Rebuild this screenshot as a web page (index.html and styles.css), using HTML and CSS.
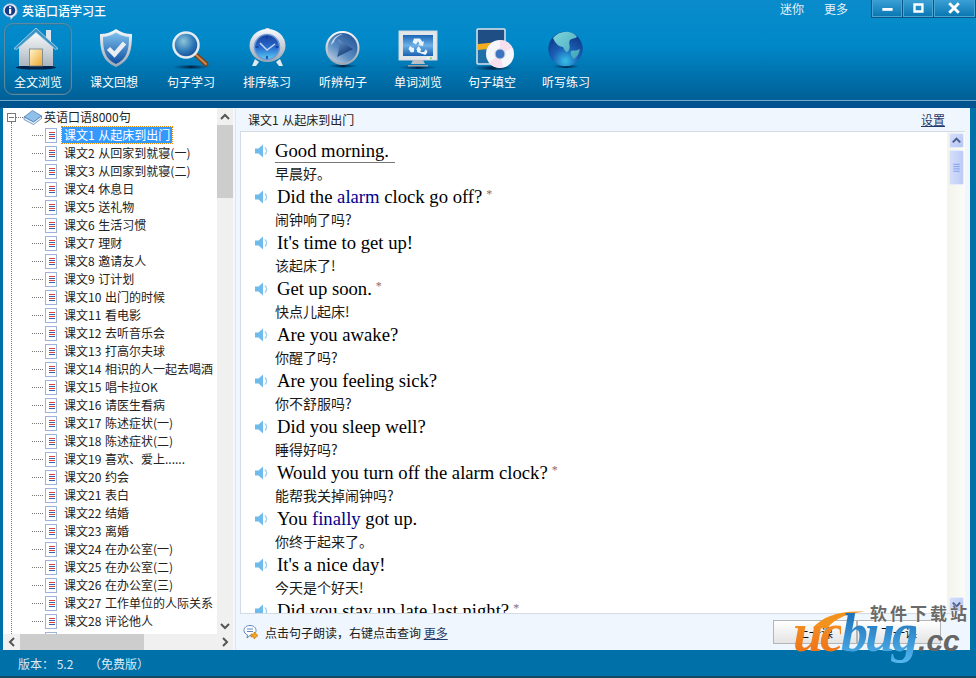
FILE: index.html
```html
<!DOCTYPE html>
<html lang="zh">
<head>
<meta charset="utf-8">
<title>英语口语学习王</title>
<link rel="stylesheet" href="styles.css">
</head>
<body>
<svg class="defs" width="0" height="0">
  <defs>
    <linearGradient id="gBlue" x1="0" y1="0" x2="0" y2="1"><stop offset="0" stop-color="#7fc0ee"/><stop offset="1" stop-color="#0f4fa0"/></linearGradient>
    <linearGradient id="gSilver" x1="0" y1="0" x2="0" y2="1"><stop offset="0" stop-color="#f8fafc"/><stop offset="1" stop-color="#9aa6b2"/></linearGradient>
    <linearGradient id="gWall" x1="0" y1="0" x2="0" y2="1"><stop offset="0" stop-color="#ffffff"/><stop offset="1" stop-color="#a9b4bf"/></linearGradient>
    <linearGradient id="gDoor" x1="0" y1="0" x2="1" y2="1"><stop offset="0" stop-color="#fff6cf"/><stop offset="1" stop-color="#eda52c"/></linearGradient>
    <radialGradient id="gBall" cx=".4" cy=".35" r=".75"><stop offset="0" stop-color="#8ec6d8"/><stop offset=".55" stop-color="#2d78b8"/><stop offset="1" stop-color="#123f88"/></radialGradient>
    <radialGradient id="gGlobe" cx=".5" cy=".85" r=".85"><stop offset="0" stop-color="#35c0ea"/><stop offset=".45" stop-color="#1a5fb4"/><stop offset="1" stop-color="#0e3382"/></radialGradient>
    <linearGradient id="gLand" x1="0" y1="0" x2="1" y2="1"><stop offset="0" stop-color="#7fd6dc"/><stop offset="1" stop-color="#3fa3b8"/></linearGradient>
    <linearGradient id="gFace" x1="0" y1="0" x2="0" y2="1"><stop offset="0" stop-color="#173f9c"/><stop offset=".55" stop-color="#2c6fd0"/><stop offset="1" stop-color="#58d0f4"/></linearGradient>
    <linearGradient id="gPlayBall" x1=".9" y1="0" x2=".1" y2="1"><stop offset="0" stop-color="#1f4f95"/><stop offset=".6" stop-color="#5c8dc2"/><stop offset="1" stop-color="#c7d6e6"/></linearGradient>
    <linearGradient id="gArrow" x1="0" y1="0" x2=".6" y2="1"><stop offset="0" stop-color="#6f9cd0"/><stop offset="1" stop-color="#0f3570"/></linearGradient>
    <linearGradient id="gScreen" x1="0" y1="0" x2="0" y2="1"><stop offset="0" stop-color="#1b66b8"/><stop offset=".5" stop-color="#6cb0e6"/><stop offset="1" stop-color="#1a62b4"/></linearGradient>
    <linearGradient id="gShadow" x1="0" y1="0" x2="1" y2="0"><stop offset="0" stop-color="#00345f" stop-opacity="0"/><stop offset=".5" stop-color="#00264a"/><stop offset="1" stop-color="#00345f" stop-opacity="0"/></linearGradient>
    <g id="spk"><path d="M1 4.500h3.500L9 .5v13L4.500 9.500H1z" fill="#6fbcec"/><path d="M11 3.500c2 2 2 5 0 7" fill="none" stroke="#a0d2f2" stroke-width="1.600"/></g>
  </defs>
</svg>
<div class="window">
  <header class="top">
    <div class="titlebar">
      <svg class="app-icon" viewBox="0 0 16 17"><path d="M8 .8a7 6.800 0 0 1 3.400 12.800L9 16.400l-.6-2.400A7 6.600 0 0 1 8 .8z" fill="#eaf1fa" stroke="#9fb4d4" stroke-width=".8"/><circle cx="8" cy="7.400" r="5.200" fill="#173a86"/><rect x="7" y="6" width="2.200" height="4.800" fill="#fff"/><rect x="7" y="3.400" width="2.200" height="1.800" fill="#fff"/></svg>
      <span class="app-title">英语口语学习王</span>
      <nav class="top-links"><span>迷你</span><span>更多</span></nav>
      <div class="win-buttons">
        <div class="win-btn win-min"><svg viewBox="0 0 30 16"><rect x="10" y="8" width="11" height="3" fill="#fff"/></svg></div>
        <div class="win-btn win-max"><svg viewBox="0 0 30 16"><path d="M10 3h11v10H10z M12.500 5.500v5h6v-5z" fill="#fff" fill-rule="evenodd"/></svg></div>
        <div class="win-btn win-close"><svg viewBox="0 0 41 16"><path d="M15 3l10 10M25 3L15 13" stroke="#fff" stroke-width="3"/></svg></div>
      </div>
    </div>
    <nav class="toolbar">
      <div class="tool tool-active">
        <svg class="tool-icon" viewBox="0 0 50 46"><ellipse cx="23" cy="42.500" rx="20" ry="2" fill="#02224a"/><path d="M6 21L23 5l17 16v20H6z" fill="url(#gWall)"/><rect x="33" y="5" width="5" height="12" fill="#dfe5ea"/><path d="M1 23.500L23 3l22 20.500-2.500 1L23 7.500 3.500 24.500z" fill="#3f93c4" stroke="#b9dcec" stroke-width=".8"/><rect x="16.500" y="24" width="13" height="17" fill="url(#gDoor)" stroke="#6f7f8c" stroke-width=".8"/></svg>
        <span class="tool-label">全文浏览</span>
      </div>
      <div class="tool">
        <svg class="tool-icon" viewBox="0 0 50 46"><g transform="translate(2 1)"><path d="M25 3c4 3 10 5 16 5 0 16-2 27-16 33C11 35 9 24 9 8c6 0 12-2 16-5z" fill="url(#gSilver)"/><path d="M25 6.500c4 2.500 8 4 13 4.500 0 13-2 22-13 27-11-5-13-14-13-27 5-.5 9-2 13-4.500z" fill="url(#gBlue)"/><path d="M17.500 22.500l6 6 10-11.500" fill="none" stroke="#e8eef4" stroke-width="4.500"/></g></svg>
        <span class="tool-label">课文回想</span>
      </div>
      <div class="tool tool-s1">
        <svg class="tool-icon" viewBox="0 0 50 46"><ellipse cx="25" cy="42" rx="19" ry="1.600" fill="url(#gShadow)"/><path d="M29 29l11 10" stroke="#7d421b" stroke-width="5" stroke-linecap="round"/><path d="M29 29l11 10" stroke="#c98a52" stroke-width="2" stroke-linecap="round"/><circle cx="20" cy="20" r="12.500" fill="url(#gBall)" stroke="#e4ecf2" stroke-width="2.500"/></svg>
        <span class="tool-label">句子学习</span>
      </div>
      <div class="tool">
        <svg class="tool-icon" viewBox="0 0 50 46"><path d="M13 34l-3 7h4l3-4zM38 34l3 7h-4l-3-4z" fill="#e4e9ee"/><rect x="23.500" y="3" width="4" height="3" fill="#c8d0d8"/><ellipse cx="25.500" cy="20.500" rx="18" ry="16.500" fill="url(#gSilver)"/><circle cx="25" cy="22" r="12.500" fill="url(#gFace)" stroke="#6f98d8" stroke-width="1.500"/><path d="M25 10.500v3M25 31v3M13.500 22h3M33.500 22h3" stroke="#0f3d9c" stroke-width="1.500"/><path d="M18 18l7 7 8-6" fill="none" stroke="#c7d6f4" stroke-width="1.500"/></svg>
        <span class="tool-label">排序练习</span>
      </div>
      <div class="tool">
        <svg class="tool-icon" viewBox="0 0 50 46"><ellipse cx="25" cy="41" rx="15" ry="1.500" fill="url(#gShadow)"/><circle cx="24.500" cy="23" r="17" fill="url(#gSilver)"/><circle cx="24.500" cy="23" r="15" fill="url(#gPlayBall)"/><path d="M13 20c1-6 6-11 12-11-5 2-8 4-9 8z" fill="#bcd8ee"/><path d="M20 14l15 10-16 8c2-6 3-12 1-18z" fill="url(#gArrow)"/></svg>
        <span class="tool-label">听辨句子</span>
      </div>
      <div class="tool tool-s3">
        <svg class="tool-icon" viewBox="0 0 50 46"><ellipse cx="25" cy="42.500" rx="20" ry="1.500" fill="url(#gShadow)"/><rect x="6" y="6" width="38" height="29" fill="#e3e6e8" stroke="#cfd8df"/><rect x="10" y="10" width="30" height="21" fill="url(#gScreen)"/><path d="M21 13.500h6l2.500 3.500 1.500-1-1 5-5-1 1.500-1-1.500-2.500-2 3-3.500-2zM17 21l3 2 1-.5v4.500l-3 .5-2.500-3.500zM24 27v-2.500l-1 .5 2.500-4 3 4-1 .5v1.500h3.500l2-3 1.500 3-2 3z" fill="#eaf4fb"/><path d="M20 35h10l2 4H18z" fill="#b8c0c6"/><path d="M15 40h20v1.500H15z" fill="#9aa2a8"/><rect x="37" y="32.500" width="2" height="1.500" fill="#6fdc5a"/><rect x="34" y="32.500" width="1.500" height="1.500" fill="#fff"/></svg>
        <span class="tool-label">单词浏览</span>
      </div>
      <div class="tool tool-s2">
        <svg class="tool-icon" viewBox="0 0 50 46"><ellipse cx="26" cy="43" rx="21" ry="1.800" fill="url(#gShadow)"/><rect x="10" y="4" width="28" height="35" rx="1" fill="#1e6ea8" stroke="#dbe2e8" stroke-width="1.500"/><rect x="11" y="5" width="26" height="14" fill="#1f4e85"/><path d="M11 19l26-2.500v6L11 25z" fill="#f3ac1e"/><circle cx="33" cy="29" r="14" fill="#f4f6fb"/><path d="M33 15a14 14 0 0 1 12 8l-12 6zM22 38a14 14 0 0 0 14 4l-3-13z" fill="#f9d9ea" opacity=".8"/><circle cx="33" cy="29" r="5" fill="#3b75bf" stroke="#c7d5e6"/></svg>
        <span class="tool-label">句子填空</span>
      </div>
      <div class="tool tool-s2">
        <svg class="tool-icon" viewBox="0 0 50 46"><ellipse cx="25" cy="41.500" rx="14" ry="1.500" fill="url(#gShadow)"/><circle cx="24.500" cy="24" r="17.200" fill="url(#gGlobe)"/><path d="M12 13c4-5 10-7 16-6 4 1 6 2 8 5-2 2-5 1-7 3-2 3 1 6-1 10-2 4-4 1-6-3-4 0-8-4-10-9zM30 26c3-1 6 0 9-2-1 5-3 8-6 10-2-2-4-5-3-8z" fill="url(#gLand)"/></svg>
        <span class="tool-label">听写练习</span>
      </div>
    </nav>
  </header>

  <main class="body">
    <aside class="tree-pane">
      <div class="tree-view">
        <ul class="tree">
          <li class="root">
            <span class="expander"></span><span class="root-dots"></span>
            <svg class="book" viewBox="0 0 19 15"><path d="M9.500 .5l9 5.500-8 6L1 7z" fill="#8fc0ea" stroke="#3f73ad" stroke-width=".7"/><path d="M1 7l9.500 5 8-6v2.500l-8 6L1 9.500z" fill="#e9f1f9" stroke="#3f73ad" stroke-width=".7"/></svg>
            <span class="tree-text">英语口语8000句</span>
          </li>
          <li class="node selected"><span class="doc"></span><span class="tree-text">课文1 从起床到出门</span></li>
          <li class="node"><span class="doc"></span><span class="tree-text">课文2 从回家到就寝(一)</span></li>
          <li class="node"><span class="doc"></span><span class="tree-text">课文3 从回家到就寝(二)</span></li>
          <li class="node"><span class="doc"></span><span class="tree-text">课文4 休息日</span></li>
          <li class="node"><span class="doc"></span><span class="tree-text">课文5 送礼物</span></li>
          <li class="node"><span class="doc"></span><span class="tree-text">课文6 生活习惯</span></li>
          <li class="node"><span class="doc"></span><span class="tree-text">课文7 理财</span></li>
          <li class="node"><span class="doc"></span><span class="tree-text">课文8 邀请友人</span></li>
          <li class="node"><span class="doc"></span><span class="tree-text">课文9 订计划</span></li>
          <li class="node"><span class="doc"></span><span class="tree-text">课文10 出门的时候</span></li>
          <li class="node"><span class="doc"></span><span class="tree-text">课文11 看电影</span></li>
          <li class="node"><span class="doc"></span><span class="tree-text">课文12 去听音乐会</span></li>
          <li class="node"><span class="doc"></span><span class="tree-text">课文13 打高尔夫球</span></li>
          <li class="node"><span class="doc"></span><span class="tree-text">课文14 相识的人一起去喝酒</span></li>
          <li class="node"><span class="doc"></span><span class="tree-text">课文15 唱卡拉OK</span></li>
          <li class="node"><span class="doc"></span><span class="tree-text">课文16 请医生看病</span></li>
          <li class="node"><span class="doc"></span><span class="tree-text">课文17 陈述症状(一)</span></li>
          <li class="node"><span class="doc"></span><span class="tree-text">课文18 陈述症状(二)</span></li>
          <li class="node"><span class="doc"></span><span class="tree-text">课文19 喜欢、爱上......</span></li>
          <li class="node"><span class="doc"></span><span class="tree-text">课文20 约会</span></li>
          <li class="node"><span class="doc"></span><span class="tree-text">课文21 表白</span></li>
          <li class="node"><span class="doc"></span><span class="tree-text">课文22 结婚</span></li>
          <li class="node"><span class="doc"></span><span class="tree-text">课文23 离婚</span></li>
          <li class="node"><span class="doc"></span><span class="tree-text">课文24 在办公室(一)</span></li>
          <li class="node"><span class="doc"></span><span class="tree-text">课文25 在办公室(二)</span></li>
          <li class="node"><span class="doc"></span><span class="tree-text">课文26 在办公室(三)</span></li>
          <li class="node"><span class="doc"></span><span class="tree-text">课文27 工作单位的人际关系</span></li>
          <li class="node"><span class="doc"></span><span class="tree-text">课文28 评论他人</span></li>
          <li class="node"><span class="doc"></span></li>
        </ul>
      </div>
      <div class="tree-vscroll">
        <span class="sb-arrow"><svg viewBox="0 0 16 8"><path d="M4 6l4-4 4 4" fill="none" stroke="#555" stroke-width="2"/></svg></span>
        <span class="tree-vthumb"></span>
        <span class="sb-fill"></span>
        <span class="sb-arrow"><svg viewBox="0 0 16 8"><path d="M4 2l4 4 4-4" fill="none" stroke="#555" stroke-width="2"/></svg></span>
      </div>
      <div class="tree-hscroll">
        <span class="sb-harrow"><svg viewBox="0 0 8 16"><path d="M6 4L2 8l4 4" fill="none" stroke="#555" stroke-width="2"/></svg></span>
        <span class="tree-hthumb"></span>
        <span class="sb-fill"></span>
        <span class="sb-harrow"><svg viewBox="0 0 8 16"><path d="M2 4l4 4-4 4" fill="none" stroke="#555" stroke-width="2"/></svg></span>
      </div>
    </aside>

    <section class="reader">
      <div class="reader-head"><span>课文1 从起床到出门</span><a class="settings">设置</a></div>
      <div class="reader-main">
        <div class="sentences">
          <div class="row"><svg class="spk" viewBox="0 0 14 14"><use href="#spk"/></svg><div class="en first"><span class="hover-line">Good morning.</span></div><div class="cn">早晨好。</div></div>
          <div class="row"><svg class="spk" viewBox="0 0 14 14"><use href="#spk"/></svg><div class="en">Did the <b class="word">alarm</b> clock go off?<sup class="star">*</sup></div><div class="cn">闹钟响了吗?</div></div>
          <div class="row"><svg class="spk" viewBox="0 0 14 14"><use href="#spk"/></svg><div class="en">It's time to get up!</div><div class="cn">该起床了!</div></div>
          <div class="row"><svg class="spk" viewBox="0 0 14 14"><use href="#spk"/></svg><div class="en">Get up soon.<sup class="star">*</sup></div><div class="cn">快点儿起床!</div></div>
          <div class="row"><svg class="spk" viewBox="0 0 14 14"><use href="#spk"/></svg><div class="en">Are you awake?</div><div class="cn">你醒了吗?</div></div>
          <div class="row"><svg class="spk" viewBox="0 0 14 14"><use href="#spk"/></svg><div class="en">Are you feeling sick?</div><div class="cn">你不舒服吗?</div></div>
          <div class="row"><svg class="spk" viewBox="0 0 14 14"><use href="#spk"/></svg><div class="en">Did you sleep well?</div><div class="cn">睡得好吗?</div></div>
          <div class="row"><svg class="spk" viewBox="0 0 14 14"><use href="#spk"/></svg><div class="en">Would you turn off the alarm clock?<sup class="star">*</sup></div><div class="cn">能帮我关掉闹钟吗?</div></div>
          <div class="row"><svg class="spk" viewBox="0 0 14 14"><use href="#spk"/></svg><div class="en">You <b class="word">finally</b> got up.</div><div class="cn">你终于起来了。</div></div>
          <div class="row"><svg class="spk" viewBox="0 0 14 14"><use href="#spk"/></svg><div class="en">It's a nice day!</div><div class="cn">今天是个好天!</div></div>
          <div class="row"><svg class="spk" viewBox="0 0 14 14"><use href="#spk"/></svg><div class="en">Did you stay up late last night?<sup class="star">*</sup></div></div>
        </div>
        <div class="content-scroll">
          <span class="cs-btn"><svg viewBox="0 0 14 14"><path d="M3 9l4-4 4 4" fill="none" stroke="#4a5f8c" stroke-width="2.200"/></svg></span>
          <span class="cs-thumb"><svg viewBox="0 0 14 10"><path d="M3.500 1h7M3.500 3.500h7M3.500 6h7M3.500 8.500h7" stroke="#7f9cea"/></svg></span>
          <span class="sb-fill"></span>
          <span class="cs-btn"><svg viewBox="0 0 14 14"><path d="M3 5l4 4 4-4" fill="none" stroke="#4a5f8c" stroke-width="2.200"/></svg></span>
        </div>
      </div>
      <div class="reader-foot">
        <svg class="tip" viewBox="0 0 16 16"><path d="M7 1.500c3.500 0 6 2 6 5s-2.500 5-6 5l-3 2.500.5-3C2.500 10 1 8.500 1 6.500c0-3 2.500-5 6-5z" fill="#fff" stroke="#5a86b8"/><path d="M4 5h6M4 7.500h6" stroke="#5a86b8"/><path d="M8 10h3V8l4 3.500L11 15v-2H8z" fill="#f5a623" stroke="#b56f10" stroke-width=".6"/></svg>
        <span class="tip-text">点击句子朗读，右键点击查询 <a class="more">更多</a></span>
        <div class="foot-buttons">
          <button class="lesson-btn">上一课</button>
          <button class="lesson-btn">下一课</button>
        </div>
      </div>
    </section>
  </main>

  <footer class="status">
    <span class="ver">版本： 5.2</span><span>（免费版）</span>
  </footer>

  <div class="watermark">
    <svg class="swoosh" viewBox="0 0 60 22"><path d="M0 20C10 8 28 0 58 2 40 3 26 8 16 20z" fill="#f4921e"/></svg>
    <span class="wm-cn">软件下载站</span>
    <span class="wm-logo"><span class="wm-uc">uc</span><span class="wm-bug">bug</span><span class="wm-cc">.cc</span></span>
  </div>
</div>
</body>
</html>
```

FILE: styles.css
```css
* { box-sizing: border-box; }
html, body { margin: 0; padding: 0; width: 976px; height: 678px; overflow: hidden; }
body { font-family: "Noto Sans CJK SC", "Liberation Sans", sans-serif; font-size: 12px; color: #1a1a1a; background: #0070a8; }
.defs { display: block; height: 0; }
ul { list-style: none; margin: 0; padding: 0; }

.window { position: relative; width: 976px; height: 678px; display: flex; flex-direction: column; background: #0070a8; border-bottom: 2px solid #124a66; }

.top { height: 108px; flex: none; background: linear-gradient(#0a8ccb 0, #0088c9 45px, #005f96 100px, #6aa9cb 100px, #6aa9cb 101px, #00538f 101px, #00538f 108px); }
.titlebar { height: 20px; display: flex; align-items: flex-start; }
.app-icon { width: 16px; height: 17px; margin: 3px 0 0 2px; flex: none; }
.app-title { margin: 2px 0 0 4px; color: #fff; font-weight: 500; line-height: 17px; }
.top-links { margin: 0 0 0 auto; display: flex; gap: 20px; color: #e6f3fb; line-height: 17px; }
.win-buttons { display: flex; height: 18px; margin-left: 23px; background: #0b5585; padding: 0 1px 1px 1px; gap: 1px; }
.win-btn { width: 30px; height: 17px; border: 1px solid #4ba5d2; border-top: 0; background: linear-gradient(#3ba0d4, #0a78b4); }
.win-btn svg { display: block; width: 100%; height: 16px; }
.win-close { width: 41px; }

.toolbar { display: flex; padding: 3px 0 0 4px; gap: 8px; }
.tool { width: 68px; height: 72px; display: flex; flex-direction: column; align-items: center; border: 1px solid transparent; border-radius: 9px; }
.tool-active { border-color: #5d8aa3; box-shadow: inset 0 0 0 1px rgba(120, 90, 70, .25); }
.tool-s1 { margin-left: 1px; }
.tool-s2 { margin-left: -2px; }
.tool-s3 { margin-left: -1px; }
.tool-icon { width: 50px; height: 46px; flex: none; margin-top: 1px; }
.tool-label { color: #fff; line-height: 18px; margin-top: 2px; white-space: nowrap; }

.body { flex: 1; display: flex; min-height: 0; padding: 0 6px 0 3px; }

.tree-pane { width: 232px; flex: none; display: grid; grid-template-columns: 214px 16px 2px; grid-template-rows: 526px 16px; background: #f4f7fb; }
.tree-view { background: #fff; overflow: hidden; position: relative; }
.tree-view::before { content: ""; position: absolute; left: 8px; top: 14px; bottom: 0; border-left: 1px dotted #777; }
.tree { white-space: nowrap; word-spacing: 1px; }
.root { height: 18px; display: flex; align-items: center; position: relative; padding-left: 4px; }
.expander { width: 9px; height: 9px; border: 1px solid #777; background: linear-gradient(#777, #777) center / 5px 1px no-repeat #fff; flex: none; }
.root-dots { width: 7px; border-top: 1px dotted #777; flex: none; }
.book { width: 19px; height: 15px; flex: none; }
.tree-text { line-height: 16px; padding: 0 2px; color: #222; }
.node { height: 18px; display: flex; align-items: center; padding-left: 42px; position: relative; }
.node::before { content: ""; position: absolute; left: 29px; width: 11px; top: 9px; border-top: 1px dotted #777; }
.doc { width: 12px; height: 15px; flex: none; margin-right: 5px; border: 1px solid #9db4d8; background: linear-gradient(#d8413e, #d8413e) 3px 3px / 6px 1px no-repeat, linear-gradient(#3a5fb0, #3a5fb0) 3px 5px / 6px 1px no-repeat, linear-gradient(#d8413e, #d8413e) 3px 7px / 6px 1px no-repeat, linear-gradient(#3a5fb0, #3a5fb0) 3px 9px / 6px 1px no-repeat, #fff; }
.selected .tree-text { background: #3399ff; color: #fff; outline: 1px dotted #e8860c; }

.tree-vscroll { display: flex; flex-direction: column; background: #f0f0f0; }
.sb-arrow { height: 17px; flex: none; display: flex; align-items: center; }
.sb-arrow svg { width: 16px; height: 8px; }
.sb-fill { flex: 1; }
.tree-vthumb { height: 73px; flex: none; background: #cdcdcd; }
.tree-hscroll { grid-column: 1 / 3; display: flex; background: #f0f0f0; }
.sb-harrow { width: 17px; flex: none; display: flex; align-items: center; justify-content: center; }
.sb-harrow svg { width: 8px; height: 16px; }
.tree-hthumb { width: 124px; flex: none; background: #cdcdcd; }

.reader { flex: 1; display: flex; flex-direction: column; background: #eff6fd; min-width: 0; border-left: 1px solid #dfe6ee; }
.reader-head { height: 23px; flex: none; display: flex; justify-content: space-between; align-items: center; padding: 0 25px 0 12px; color: #222; word-spacing: 1px; }
.settings { color: #1f3a6b; text-decoration: underline; }
.reader-main { height: 483px; flex: none; margin: 0 5px 0 4px; display: flex; border: 1px solid #d3dce6; border-width: 1px 0 1px 1px; background: #fff; }
.sentences { flex: 1; overflow: hidden; padding: 7px 0 0 13px; }
.row { height: 46px; position: relative; padding-left: 21px; }
.spk { position: absolute; left: 0; top: 5px; width: 14px; height: 14px; }
.en { height: 23px; font-family: "Liberation Serif", serif; font-size: 18.67px; line-height: 23px; color: #000; padding-left: 2px; white-space: nowrap; }
.en.first { padding-left: 0; }
.hover-line { display: inline-block; width: 120px; line-height: 23px; border-bottom: 1px solid #777; }
.word { font-weight: 400; color: #00008b; }
.star { font-size: 12px; color: #8a6a70; vertical-align: 5px; line-height: 0; margin-left: 4px; }
.cn { line-height: 23px; font-size: 14px; color: #1a1a1a; }

.content-scroll { width: 18px; flex: none; display: flex; flex-direction: column; align-items: center; background: linear-gradient(90deg, #f4f4ec, #fbfbf8); padding: 1px 0; gap: 2px; }
.cs-btn { width: 15px; height: 15px; flex: none; background: linear-gradient(135deg, #d6e0fb, #b4c4f4); border: 1px solid #e6ecfb; border-radius: 2px; }
.cs-btn svg { display: block; width: 13px; height: 13px; }
.cs-thumb { width: 15px; height: 35px; flex: none; background: linear-gradient(90deg, #d4defa, #bccbf6); border: 1px solid #e6ecfb; border-radius: 2px; display: flex; align-items: center; justify-content: center; }
.cs-thumb svg { width: 13px; height: 10px; }

.reader-foot { flex: 1; display: flex; align-items: center; padding-left: 7px; min-height: 0; }
.tip { width: 16px; height: 16px; flex: none; }
.tip-text { margin-left: 6px; }
.more { color: #1f3a6b; text-decoration: underline; }
.foot-buttons { margin-left: auto; margin-right: 29px; display: flex; }
.lesson-btn { width: 84px; height: 24px; border: 1px solid #b5b5b5; background: linear-gradient(#ffffff, #e4e4e4); font: 12px "Noto Sans CJK SC", sans-serif; color: #111; padding: 0; }

.status { height: 26px; flex: none; display: flex; align-items: center; padding-left: 18px; color: #d8eaf5; }
.ver { width: 71px; }

.watermark { position: absolute; left: 790px; top: 604px; width: 186px; height: 60px; }
.swoosh { position: absolute; left: 22px; top: 6px; width: 56px; height: 20px; }
.wm-cn { position: absolute; left: 80px; top: -1px; font-size: 17px; line-height: 20px; font-weight: 700; letter-spacing: 3px; color: #6a6a6a; white-space: nowrap; text-shadow: 0 0 2px #fff; }
.wm-logo { position: absolute; left: 3px; top: 2px; font-family: "Liberation Serif", serif; font-weight: 700; font-style: italic; font-size: 54px; line-height: 54px; white-space: nowrap; }
.wm-uc { letter-spacing: -3px; background: linear-gradient(#f7a02c, #ee6a12); -webkit-background-clip: text; background-clip: text; color: transparent; }
.wm-bug { letter-spacing: -3px; background: linear-gradient(#0f63b0, #55b6ee); -webkit-background-clip: text; background-clip: text; color: transparent; }
.wm-cc { font-family: "Liberation Sans", sans-serif; color: #666; font-size: 30px; margin-left: 2px; }
```
